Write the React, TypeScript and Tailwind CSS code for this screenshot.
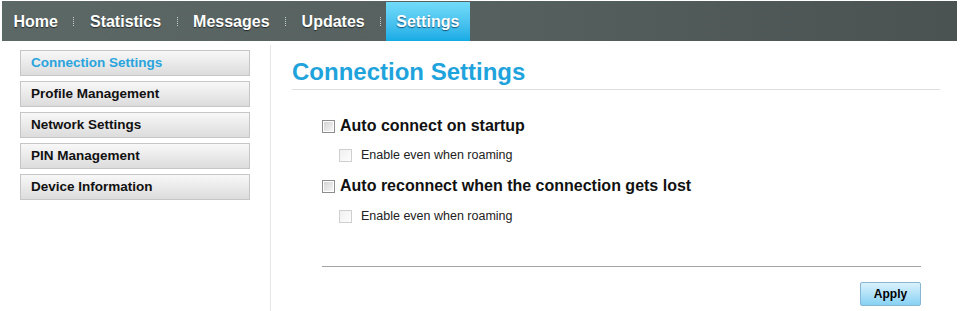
import React from "react";

const navItems = ["Home", "Statistics", "Messages", "Updates"];
const sideItems = ["Connection Settings", "Profile Management", "Network Settings", "PIN Management", "Device Information"];

const Checkbox = ({ sub }: { sub?: boolean }) =>
  sub ? (
    <span className="inline-block w-[13px] h-[13px] border border-[#cfcfcf] bg-gradient-to-br from-[#f0f0f0] to-[#fdfdfd]" />
  ) : (
    <span className="inline-block w-[13px] h-[13px] border border-[#8d8d8d] p-px bg-white">
      <span className="block w-full h-full bg-gradient-to-br from-[#d4d4d4] to-[#f6f6f6]" />
    </span>
  );

const Sep = () => <span className="mx-[4px] h-[9px] border-l border-dotted border-[#c9cfcd]" />;

export default function App() {
  return (
    <div className="h-[311px] w-[962px] bg-white overflow-hidden font-['Liberation_Sans',Arial,sans-serif]">
      <nav className="mt-px ml-[2px] mr-[5px] h-[40px] flex items-center bg-gradient-to-r from-[#5c6866] via-[#56615f] to-[#4a5252]">
        {navItems.map((item) => (
          <React.Fragment key={item}>
            <span className="px-[11.5px] pt-px text-[16px] font-bold text-white [text-shadow:0_1px_1px_rgba(0,0,0,0.6)]">
              {item}
            </span>
            <Sep />
          </React.Fragment>
        ))}
        <span className="ml-[0.5px] h-[39px] mt-px px-[10.5px] pt-px flex items-center text-[16px] font-bold text-white bg-gradient-to-b from-[#72dcf9] to-[#12ace5] [text-shadow:0_1px_1px_rgba(0,40,70,0.7)]">
          Settings
        </span>
      </nav>

      <div className="flex h-[270px]">
        <aside className="w-[270px] shrink-0 pl-[20px] pt-[9px] pr-[20px] flex flex-col gap-[5px]">
          {sideItems.map((item, i) => (
            <div
              key={item}
              className={`h-[26px] flex items-center pl-[10px] border border-[#c6c6c6] bg-gradient-to-b from-[#f8f8f8] to-[#dcdcdc] text-[13.5px] font-bold ${
                i === 0 ? "text-[#2aa4dd]" : "text-[#111]"
              }`}
            >
              {item}
            </div>
          ))}
        </aside>

        <main className="mt-[4px] flex-1 border-l border-[#e6e6e6] pl-[21px] pr-[22px]">
          <h1 className="mt-[13px] pb-[3px] leading-[28px] text-[24px] font-bold text-[#1fa3dc] border-b border-[#dedede]">
            Connection Settings
          </h1>

          <div className="pl-[30px] pr-[19px]">
            <label className="mt-[26px] h-[20px] flex items-center gap-[5px] text-[16px] font-bold text-[#111]">
              <Checkbox />
              Auto connect on startup
            </label>
            <label className="mt-[9px] ml-[17px] h-[20px] flex items-center gap-[9px] text-[12.5px] text-[#222]">
              <Checkbox sub />
              Enable even when roaming
            </label>
            <label className="mt-[11px] h-[20px] flex items-center gap-[5px] text-[16px] font-bold text-[#111]">
              <Checkbox />
              Auto reconnect when the connection gets lost
            </label>
            <label className="mt-[10px] ml-[17px] h-[20px] flex items-center gap-[9px] text-[12.5px] text-[#222]">
              <Checkbox sub />
              Enable even when roaming
            </label>

            <div className="mt-[40px] border-t border-[#a3a3a3]" />

            <div className="mt-[15px] flex justify-end">
              <button className="w-[61px] h-[24px] rounded-[2px] border border-[#86b6d4] bg-gradient-to-b from-[#d9f2fd] to-[#86d1f3] text-[12px] font-bold text-black font-['Liberation_Sans_Narrow','Liberation_Sans',sans-serif]">
                Apply
              </button>
            </div>
          </div>
        </main>
      </div>
    </div>
  );
}
